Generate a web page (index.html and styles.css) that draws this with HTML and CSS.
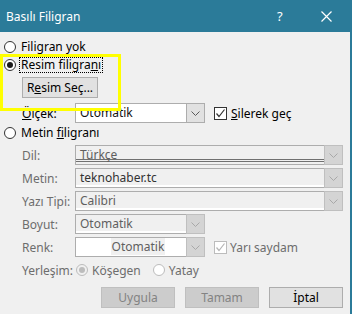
FILE: index.html
```html
<!DOCTYPE html>
<html lang="tr">

<head>
    <meta charset="UTF-8">
    <title>Basılı Filigran</title>
    <link rel="stylesheet" href="styles.css">
</head>

<body>
    <div class="dialog">
        <!-- başlık çubuğu -->
        <div class="titlebar">
            <span class="title">Basılı Filigran</span>
            <span class="help">?</span>
            <svg class="close" width="11" height="11" viewBox="0 0 11 11">
                <path d="M0.5 0.5 L10.5 10.5 M10.5 0.5 L0.5 10.5" stroke="#fff" stroke-width="1.2" fill="none" />
            </svg>
        </div>

        <div class="content">
            <div class="opt">
                <span class="radio"></span>
                <span class="opt-text">Fili<u>g</u>ran yok</span>
            </div>
            <div class="opt">
                <span class="radio on"></span>
                <span class="opt-text focus">Resim filigra<u>n</u>ı</span>
            </div>

            <div class="pic-block">
                <button class="btn pick">R<u>e</u>sim Seç...</button>
                <div class="scale-row">
                    <span class="lbl"><u>Ö</u>lçek:</span>
                    <div class="select narrow white">
                        <span class="val">Otomatik</span>
                        <span class="arrow">
                            <svg width="9" height="5" viewBox="0 0 9 5"><path d="M0.5 0.5 L4.5 4.5 L8.5 0.5" stroke="#5a5a5a" fill="none" /></svg>
                        </span>
                    </div>
                    <div class="check">
                        <span class="box">
                            <svg width="11" height="11" viewBox="0 0 11 11"><path d="M1.5 5.5 L4 8.5 L9.5 1.5" stroke="#333" stroke-width="1.2" fill="none" /></svg>
                        </span>
                        <span><u>S</u>ilerek geç</span>
                    </div>
                </div>
            </div>

            <div class="opt text-opt">
                <span class="radio"></span>
                <span class="opt-text">Metin <u>f</u>iligranı</span>
            </div>

            <!-- metin filigranı alanları (devre dışı) -->
            <div class="form">
                <span class="lbl off">Dil:</span>
                <div class="select off lang">
                    <span class="val">Türkçe</span>
                    <span class="arrow"><svg width="9" height="5" viewBox="0 0 9 5"><path d="M0.5 0.5 L4.5 4.5 L8.5 0.5" stroke="#a8a8a8" fill="none" /></svg></span>
                </div>

                <span class="lbl off">Metin:</span>
                <div class="select off">
                    <span class="val dark">teknohaber.tc</span>
                    <span class="arrow"><svg width="9" height="5" viewBox="0 0 9 5"><path d="M0.5 0.5 L4.5 4.5 L8.5 0.5" stroke="#a8a8a8" fill="none" /></svg></span>
                </div>

                <span class="lbl off">Yazı Tipi:</span>
                <div class="select off">
                    <span class="val">Calibri</span>
                    <span class="arrow"><svg width="9" height="5" viewBox="0 0 9 5"><path d="M0.5 0.5 L4.5 4.5 L8.5 0.5" stroke="#a8a8a8" fill="none" /></svg></span>
                </div>

                <span class="lbl off">Boyut:</span>
                <div class="select off narrow">
                    <span class="val">Otomatik</span>
                    <span class="arrow"><svg width="9" height="5" viewBox="0 0 9 5"><path d="M0.5 0.5 L4.5 4.5 L8.5 0.5" stroke="#a8a8a8" fill="none" /></svg></span>
                </div>

                <span class="lbl off">Renk:</span>
                <div class="color-row">
                    <div class="select off narrow white center">
                        <span class="val"><span class="hl">Otomatik</span></span>
                        <span class="arrow"><svg width="9" height="5" viewBox="0 0 9 5"><path d="M0.5 0.5 L4.5 4.5 L8.5 0.5" stroke="#a8a8a8" fill="none" /></svg></span>
                    </div>
                    <div class="check off">
                        <span class="box">
                            <svg width="11" height="11" viewBox="0 0 11 11"><path d="M1.5 5.5 L4 8.5 L9.5 1.5" stroke="#b5b5b5" stroke-width="1.2" fill="none" /></svg>
                        </span>
                        <span>Yarı saydam</span>
                    </div>
                </div>

                <span class="lbl off">Yerleşim:</span>
                <div class="layout-row">
                    <span class="radio off on"></span>
                    <span class="off-text">Köşegen</span>
                    <span class="radio off"></span>
                    <span class="off-text">Yatay</span>
                </div>
            </div>

            <div class="actions">
                <button class="btn disabled">Uygula</button>
                <button class="btn disabled">Tamam</button>
                <button class="btn">İptal</button>
            </div>
        </div>

        <!-- sarı işaret çerçevesi -->
        <div class="highlight"></div>
    </div>
</body>

</html>
```

FILE: styles.css
```css
body {
    margin: 0;
    padding: 0;
    background-color: #fff;
    font-family: "Noto Sans", "Open Sans", sans-serif;
    font-size: 12px;
    color: #000;
}

.dialog {
    position: relative;
    width: 350px;
    height: 314px;
    background-color: #f0f0f0;
    border-right: 2px solid #2b7b99;
}

.titlebar {
    height: 32px;
    background-color: #2b7b99;
    display: flex;
    align-items: center;
    padding: 0 0 0 6px;
    color: #fff;
}

.title {
    flex: 1;
    font-size: 12px;
}

.help {
    width: 8px;
    margin-right: 36px;
    font-size: 13px;
}

.close {
    margin-right: 18px;
}

.content {
    padding: 6px 7px 0 4px;
}

.opt {
    height: 18px;
    display: flex;
    align-items: center;
}

.text-opt {
    margin-top: 1px;
}

.radio {
    width: 12px;
    height: 12px;
    box-sizing: border-box;
    border: 1px solid #333;
    border-radius: 50%;
    background: #fff;
    display: inline-flex;
    align-items: center;
    justify-content: center;
    flex-shrink: 0;
}

.radio.on::after {
    content: "";
    width: 6px;
    height: 6px;
    border-radius: 50%;
    background: #1a1a1a;
}

.opt-text {
    margin-left: 5px;
    line-height: 14px;
}

.focus {
    margin-left: 4px;
    padding: 0 1px;
    outline: 1px dotted #000;
}

.pic-block {
    padding-left: 18px;
}

.btn {
    font-family: inherit;
    font-size: 12px;
    height: 21px;
    width: 74px;
    padding: 0;
    background-color: #e1e1e1;
    border: 1px solid #adadad;
    color: #000;
}

.pick {
    display: block;
    width: 76px;
    margin-top: 3px;
}

.btn.disabled {
    background-color: #cccccc;
    border-color: #bfbfbf;
    color: #838383;
}

.scale-row {
    display: flex;
    align-items: center;
    margin-top: 5px;
    height: 20px;
}

.lbl {
    width: 53px;
}

.lbl.off,
.off-text {
    color: #6d6d6d;
}

.select {
    height: 20px;
    box-sizing: border-box;
    width: 268px;
    border: 1px solid #adadad;
    display: flex;
    background: #f0f0f0;
    box-shadow: inset 0 -2px 0 #fff;
}

.select.narrow {
    width: 130px;
}

.select.white {
    background: #fff;
    box-shadow: none;
}

.val {
    flex: 1;
    padding-left: 4px;
    line-height: 17px;
    color: #111;
}

.select.off .val {
    color: #5f5f5f;
}

.select.off .val.dark {
    color: #333;
}

.select.center .val {
    text-align: center;
    padding-left: 14px;
}

.hl {
    background: #f0f0f0;
    padding: 0 1px;
}

.select.lang {
    background: linear-gradient(#f0f0f0 13px, #707070 13px, #707070 14px, #f0f0f0 14px, #f0f0f0 15px, #707070 15px, #707070 16px, #f0f0f0 16px);
    background-size: 250px 100%;
    background-repeat: no-repeat;
    box-shadow: none;
}

.arrow {
    width: 17px;
    margin: -1px -1px -1px 0;
    border: 1px solid #adadad;
    background: #e1e1e1;
    display: flex;
    align-items: center;
    justify-content: center;
}

.select.off .arrow {
    background: #d4d4d4;
    border-color: #bfbfbf;
}

.check {
    display: flex;
    align-items: center;
    margin-left: 9px;
}

.box {
    width: 13px;
    height: 13px;
    box-sizing: border-box;
    border: 1px solid #333;
    background: #fff;
    margin-right: 4px;
    display: flex;
    align-items: center;
    justify-content: center;
}

.check.off {
    color: #6d6d6d;
}

.check.off .box {
    border-color: #bcbcbc;
    margin-right: 3px;
}

.form {
    display: grid;
    grid-template-columns: 53px 268px;
    grid-auto-rows: 20px;
    row-gap: 3px;
    align-items: center;
    padding-left: 18px;
    margin-top: 3px;
}

.color-row,
.layout-row {
    display: flex;
    align-items: center;
}

.layout-row {
    padding-left: 1px;
}

.radio.off {
    border-color: #bcbcbc;
}

.radio.off.on {
    background: #f0f0f0;
}

.radio.off.on::after {
    background: #bcbcbc;
}

.layout-row .off-text {
    margin-left: 4px;
    margin-right: 12px;
}

.actions {
    display: flex;
    justify-content: flex-end;
    gap: 10px;
    margin-top: 7px;
}

.highlight {
    position: absolute;
    left: 0;
    top: 54px;
    width: 121px;
    height: 57px;
    box-sizing: border-box;
    border: 3px solid #ffff00;
}
```
